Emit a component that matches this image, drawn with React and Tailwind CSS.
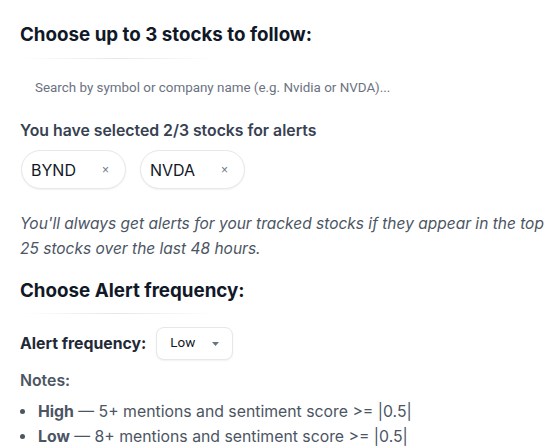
import React from "react";

function Sep() {
  return <div className="h-px w-[196px] bg-gradient-to-r from-transparent via-[#e5e7eb] to-transparent" />;
}

function Chip({ label }) {
  return (
    <div className="flex h-[39px] items-center rounded-full border border-[#e5e7eb] bg-white pl-[9px] pr-[16px] shadow-[0_1px_2px_rgba(0,0,0,0.06)]">
      <span className="w-[71px] text-[16px] text-[#111827]">{label}</span>
      <span className="text-[12px] text-[#6b7280] font-['Liberation_Sans',sans-serif]">×</span>
    </div>
  );
}

export default function App() {
  return (
    <div className="min-h-screen bg-white pl-5 pt-[23px] font-['Inter',sans-serif]">
      <h2 className="text-[18.75px] font-bold leading-[24px] text-[#111827]">Choose up to 3 stocks to follow:</h2>
      <div className="mt-[11px]"><Sep /></div>
      <div className="mt-[21px] pl-[15px] text-[13.4px] leading-[16px] text-[#6b7280] font-['Roboto',sans-serif]">
        Search by symbol or company name (e.g. Nvidia or NVDA)...
      </div>
      <div className="mt-[25px] text-[15.8px] font-semibold leading-[20px] text-[#374151]">You have selected 2/3 stocks for alerts</div>
      <div className="mt-[9px] flex gap-[14px] pl-px">
        <Chip label="BYND" />
        <Chip label="NVDA" />
      </div>
      <p className="mt-[22px] text-[15.5px] italic leading-[25px] text-[#4b5563]">
        You'll always get alerts for your tracked stocks if they appear in the top 25 stocks over the last 48 hours.
      </p>
      <h2 className="mt-[18px] text-[18.75px] font-bold leading-[24px] text-[#111827]">Choose Alert frequency:</h2>
      <div className="mt-[10px]"><Sep /></div>
      <div className="mt-[13px] flex items-center gap-[10px]">
        <span className="text-[15.8px] font-bold text-[#1f2937]">Alert frequency:</span>
        <div className="flex h-[33px] w-[77px] items-center justify-between rounded-lg border border-[#e5e7eb] bg-white pl-[13px] pr-[13px] shadow-[0_1px_2px_rgba(0,0,0,0.06)]">
          <span className="text-[13.4px] text-[#111827] font-['Roboto',sans-serif]">Low</span>
          <svg width="7" height="4" viewBox="0 0 7 4"><path d="M0 0h7L3.5 4z" fill="#6b7280" /></svg>
        </div>
      </div>
      <div className="mt-[11px] text-[15.8px] font-semibold leading-[20px] text-[#4b5563]">Notes:</div>
      <ul className="mt-[8px] list-disc pl-[17px] text-[15.8px] leading-[25px] text-[#4b5563]">
        <li className="pl-[1px]"><b className="font-bold">High</b> — 5+ mentions and sentiment score &gt;= |0.5|</li>
        <li className="pl-[1px]"><b className="font-bold">Low</b> — 8+ mentions and sentiment score &gt;= |0.5|</li>
      </ul>
    </div>
  );
}
